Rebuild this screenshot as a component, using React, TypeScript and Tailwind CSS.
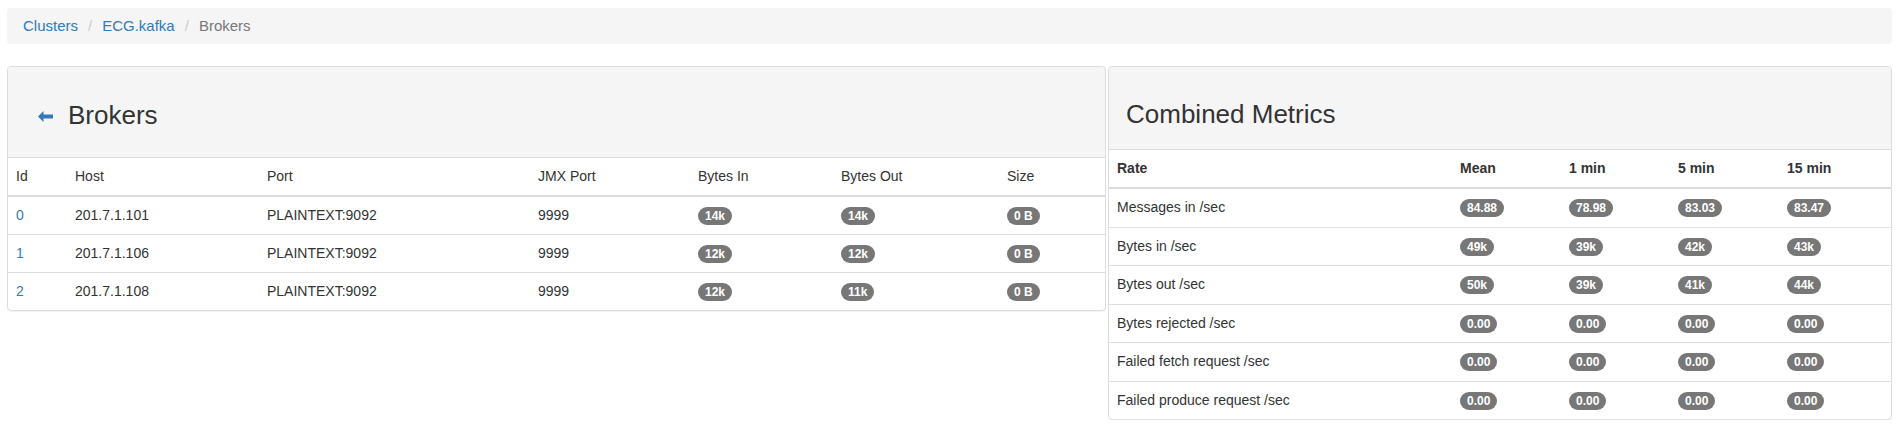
import clsx from 'clsx';

const BROKERS = [
  { id: 0, host: '201.7.1.101', port: 'PLAINTEXT:9092', jmx: '9999', bytesIn: '14k', bytesOut: '14k', size: '0 B' },
  { id: 1, host: '201.7.1.106', port: 'PLAINTEXT:9092', jmx: '9999', bytesIn: '12k', bytesOut: '12k', size: '0 B' },
  { id: 2, host: '201.7.1.108', port: 'PLAINTEXT:9092', jmx: '9999', bytesIn: '12k', bytesOut: '11k', size: '0 B' },
];

const METRICS: [string, string, string, string, string][] = [
  ['Messages in /sec', '84.88', '78.98', '83.03', '83.47'],
  ['Bytes in /sec', '49k', '39k', '42k', '43k'],
  ['Bytes out /sec', '50k', '39k', '41k', '44k'],
  ['Bytes rejected /sec', '0.00', '0.00', '0.00', '0.00'],
  ['Failed fetch request /sec', '0.00', '0.00', '0.00', '0.00'],
  ['Failed produce request /sec', '0.00', '0.00', '0.00', '0.00'],
];

function Badge({ children }: { children: React.ReactNode }) {
  return (
    <span className="inline-block rounded-[10px] bg-[#777] px-[7px] py-[3px] align-middle text-[12px] leading-none font-bold text-white">
      {children}
    </span>
  );
}

function ArrowLeft() {
  return (
    <svg width="15" height="11" viewBox="0 0 15 11" className="fill-[#337ab7]">
      <path d="M0 5.5 L5.5 0 V3.5 H15 V7.5 H5.5 V11 Z" />
    </svg>
  );
}

export default function App() {
  // brokers table has plain headers, metrics table has bold ones
  const th = 'px-2 py-2 text-left font-normal leading-[21px] border-b-2 border-[#ddd]';
  const thBold = 'px-2 py-2 text-left font-bold leading-[21px] border-b-2 border-[#ddd]';
  const td = 'px-2 py-2 leading-[21px] border-t border-[#ddd]';
  const tdMetric = 'px-2 py-2 leading-[21.5px] border-t border-[#ddd]';

  return (
    <div className="bg-white pl-[7px] pr-[9px] pt-[8px] text-[14px] text-[#333] font-['Liberation_Sans',Arial,sans-serif]">
      {/* breadcrumb */}
      <div className="flex h-[36px] items-center rounded-[4px] bg-[#f5f5f5] pl-[16px] text-[15px]">
        <a className="text-[#337ab7]">Clusters</a>
        <span className="px-[10px] text-[#ccc]">/</span>
        <a className="text-[#337ab7]">ECG.kafka</a>
        <span className="px-[10px] text-[#ccc]">/</span>
        <span className="text-[#777]">Brokers</span>
      </div>

      <div className="mt-[22px] flex items-start gap-[2px]">
        {/* Brokers panel */}
        <div className="w-[1099px] rounded-[4px] border border-[#ddd] shadow-[0_1px_1px_rgba(0,0,0,0.05)]">
          <div className="flex h-[91px] items-start gap-[15px] rounded-t-[4px] border-b border-[#ddd] bg-[#f5f5f5] pl-[30px] pt-[34px]">
            <span className="mt-[10px]"><ArrowLeft /></span>
            <h3 className="text-[26px] leading-[1.1]">Brokers</h3>
          </div>
          <table className="w-full table-fixed border-collapse">
            <thead>
              <tr>
                <th className={clsx(th, 'w-[59px]')}>Id</th>
                <th className={clsx(th, 'w-[192px]')}>Host</th>
                <th className={clsx(th, 'w-[271px]')}>Port</th>
                <th className={clsx(th, 'w-[160px]')}>JMX Port</th>
                <th className={clsx(th, 'w-[143px]')}>Bytes In</th>
                <th className={clsx(th, 'w-[166px]')}>Bytes Out</th>
                <th className={th}>Size</th>
              </tr>
            </thead>
            <tbody>
              {BROKERS.map(b => (
                <tr key={b.id}>
                  <td className={td}><a className="text-[#337ab7]">{b.id}</a></td>
                  <td className={td}>{b.host}</td>
                  <td className={td}>{b.port}</td>
                  <td className={td}>{b.jmx}</td>
                  <td className={td}><Badge>{b.bytesIn}</Badge></td>
                  <td className={td}><Badge>{b.bytesOut}</Badge></td>
                  <td className={td}><Badge>{b.size}</Badge></td>
                </tr>
              ))}
            </tbody>
          </table>
        </div>

        {/* Combined metrics panel */}
        <div className="flex-1 rounded-[4px] border border-[#ddd] shadow-[0_1px_1px_rgba(0,0,0,0.05)]">
          <div className="h-[83px] rounded-t-[4px] border-b border-[#ddd] bg-[#f5f5f5] pl-[17px] pt-[33px]">
            <h3 className="text-[26px] leading-[1.1]">Combined Metrics</h3>
          </div>
          <table className="w-full table-fixed border-collapse">
            <thead>
              <tr>
                <th className={clsx(thBold, 'w-[343px]')}>Rate</th>
                <th className={clsx(thBold, 'w-[109px]')}>Mean</th>
                <th className={clsx(thBold, 'w-[109px]')}>1 min</th>
                <th className={clsx(thBold, 'w-[109px]')}>5 min</th>
                <th className={thBold}>15 min</th>
              </tr>
            </thead>
            <tbody>
              {METRICS.map(([label, ...vals]) => (
                <tr key={label}>
                  <td className={tdMetric}>{label}</td>
                  {vals.map((v, i) => (
                    <td key={i} className={tdMetric}>
                      <Badge>{v}</Badge>
                    </td>
                  ))}
                </tr>
              ))}
            </tbody>
          </table>
        </div>
      </div>
    </div>
  );
}
